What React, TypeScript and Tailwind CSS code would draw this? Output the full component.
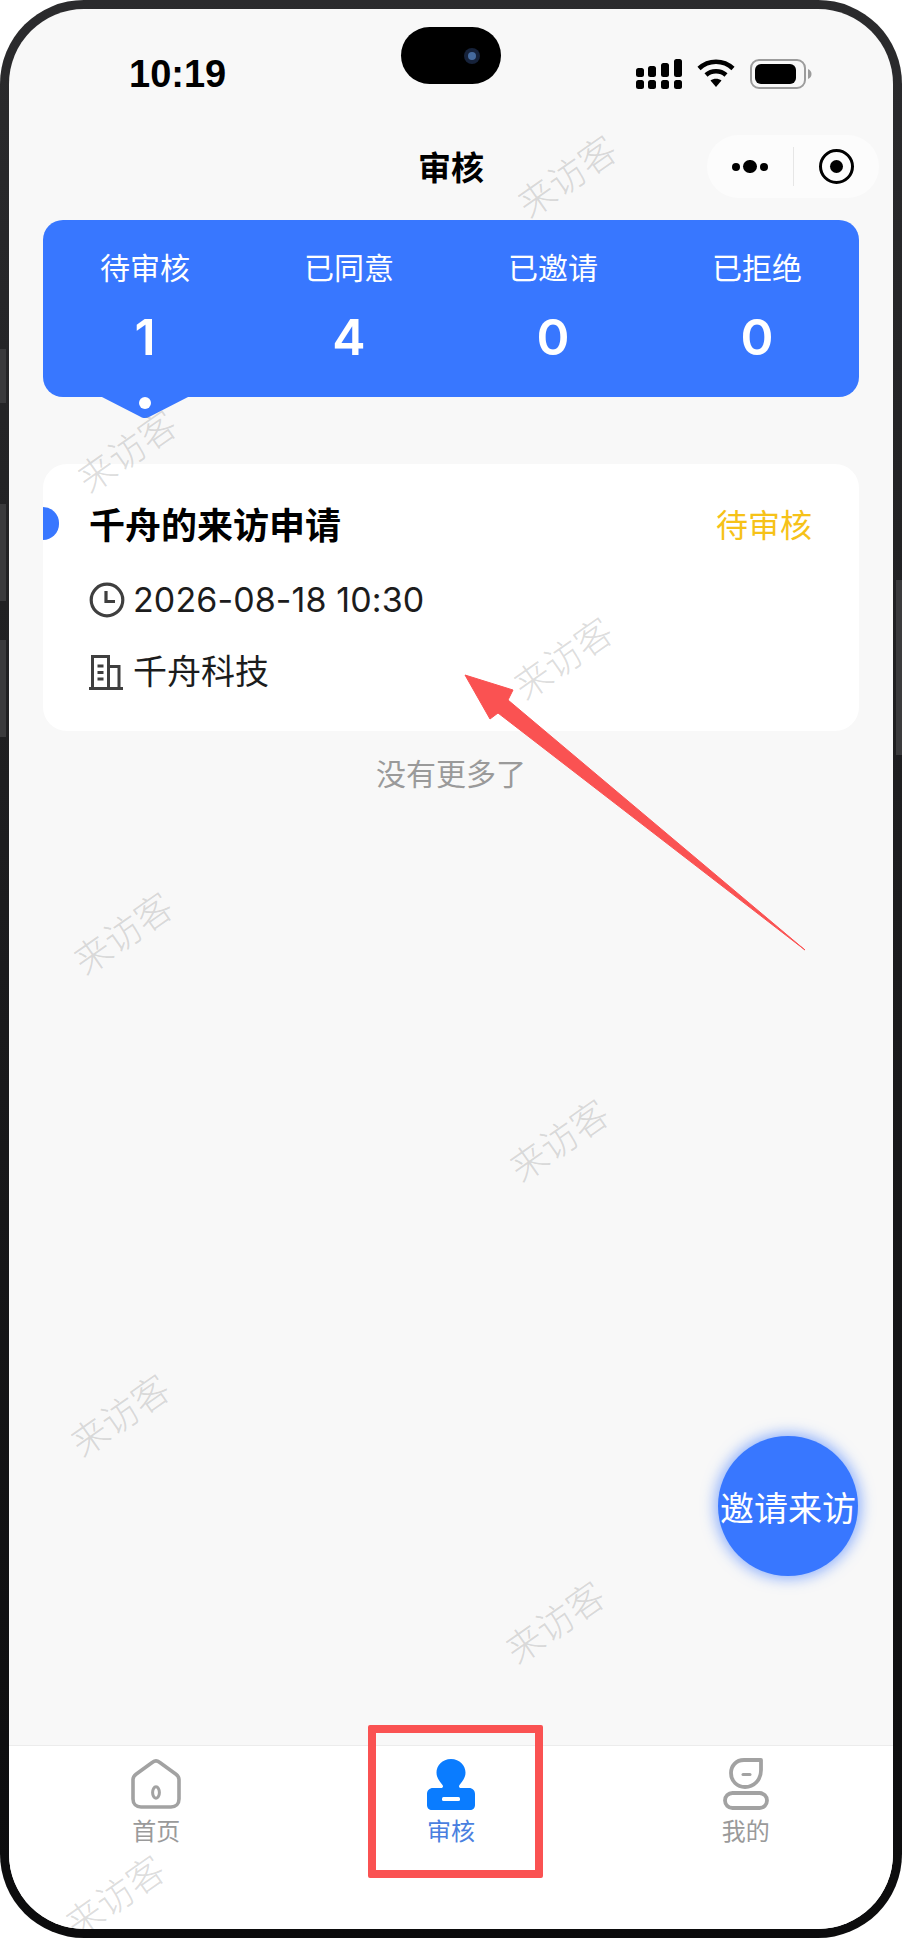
const stats = [
  { label: "待审核", value: 1 },
  { label: "已同意", value: 4 },
  { label: "已邀请", value: 0 },
  { label: "已拒绝", value: 0 },
];

// watermark centres, relative to the screen
const watermarks = [
  "left-[557px] top-[166px]",
  "left-[117px] top-[441px]",
  "left-[553px] top-[648px]",
  "left-[113px] top-[923px]",
  "left-[549px] top-[1130px]",
  "left-[110px] top-[1405px]",
  "left-[545px] top-[1612px]",
  "left-[105px] top-[1886px]",
];

const sideButtons = [
  "left-0 top-[349px] h-[54px]",
  "left-0 top-[504px] h-[97px]",
  "left-0 top-[640px] h-[97px]",
  "right-0 top-[580px] h-[175px]",
];

function SignalIcon() {
  return (
    <svg width="46" height="30" viewBox="0 0 46 30" fill="#000">
      <rect x="0" y="21" width="8" height="9" rx="2.5" />
      <rect x="12" y="21" width="8" height="9" rx="2.5" />
      <rect x="25" y="21" width="8" height="9" rx="2.5" />
      <rect x="38" y="21" width="8" height="9" rx="2.5" />
      <rect x="0" y="9" width="8" height="9" rx="2.5" />
      <rect x="12" y="7" width="8" height="11" rx="2.5" />
      <rect x="25" y="4" width="8" height="14" rx="2.5" />
      <rect x="38" y="0" width="8" height="18" rx="2.5" />
    </svg>
  );
}

function WifiIcon() {
  return (
    <svg width="38" height="28" viewBox="0 0 38 28" fill="none" stroke="#000" strokeWidth="4.5">
      <path d="M2 9.5C11.5 0.5 26.5 0.5 36 9.5" />
      <path d="M9 16C14.5 11 23.5 11 29 16" />
      <path d="M19 28L13.5 21.5C16.5 19 21.5 19 24.5 21.5Z" fill="#000" stroke="none" />
    </svg>
  );
}

function BatteryIcon() {
  return (
    <svg width="62" height="30" viewBox="0 0 62 30" fill="none">
      <rect x="1" y="1" width="54" height="28" rx="8" stroke="#9c9c9c" strokeWidth="2" />
      <rect x="5" y="5" width="41" height="20" rx="6" fill="#000" />
      <path d="M58 10C60.5 11 61.5 13 61.5 15C61.5 17 60.5 19 58 20Z" fill="#9c9c9c" />
    </svg>
  );
}

function ClockIcon() {
  return (
    <svg width="36" height="36" viewBox="0 0 36 36" fill="none" stroke="#3f3f3f" strokeWidth="3.2">
      <circle cx="18" cy="18" r="15.8" />
      <path d="M17 9V19.5H26" />
    </svg>
  );
}

function BuildingIcon() {
  return (
    <svg width="34" height="35" viewBox="0 0 34 35" fill="none" stroke="#3f3f3f" strokeWidth="3">
      <path d="M0 33.5H34" />
      <path d="M3.5 33V1.5H19.5V33" />
      <path d="M19.5 11.5H30V33" />
      <path d="M8.5 11H14.5M8.5 17.5H14.5M8.5 24H14.5" />
    </svg>
  );
}

function HomeIcon() {
  return (
    <svg width="50" height="50" viewBox="0 0 50 50" fill="none" stroke="#a2a2a2" strokeWidth="3.6">
      <path
        d="M21.5 3.2C23.6 1.6 26.4 1.6 28.5 3.2L45 15.2C46.9 16.6 48 18.6 48 20.8V40C48 44.8 44.8 48 40 48H10C5.2 48 2 44.8 2 40V20.8C2 18.6 3.1 16.6 5 15.2Z"
        strokeLinejoin="round"
      />
      <ellipse cx="25" cy="33.5" rx="3.4" ry="5.8" strokeWidth="3" />
    </svg>
  );
}

function StampIcon() {
  return (
    <svg width="50" height="51" viewBox="0 0 48 51" fill="none">
      <path
        d="M24 0C32.8 0 38.5 6.5 38.5 13.5C38.5 19 35.5 22 32.5 26C31.5 27.5 32 29 34 29H42C45.5 29 48 31.5 48 35V46C48 49 46 51 43 51H5C2 51 0 49 0 46V35C0 31.5 2.5 29 6 29H14C16 29 16.5 27.5 15.5 26C12.5 22 9.5 19 9.5 13.5C9.5 6.5 15.2 0 24 0Z"
        fill="#0a7cff"
      />
      <rect x="15" y="38" width="18" height="4" rx="1.5" fill="#fff" />
    </svg>
  );
}

function MeIcon() {
  return (
    <svg width="46" height="52" viewBox="0 0 46 52" fill="none" stroke="#a2a2a2" strokeWidth="3.8">
      <path d="M38 2H21C13 2 8 8 8 15C8 23 14 29 22 29C31 29 38 22 38 12Z" strokeLinejoin="round" />
      <path d="M20 16.5H27" strokeWidth="3" strokeLinecap="round" />
      <rect x="2" y="35" width="42" height="15" rx="7.5" />
    </svg>
  );
}

export default function App() {
  return (
    <div className="relative h-[1938px] w-[902px] overflow-hidden bg-white font-['Noto_Sans_CJK_SC',sans-serif]">
      {/* phone frame */}
      <div className="h-full w-full rounded-[84px] bg-gradient-to-b from-[#2b2b2d] via-[#1b1b1d] to-[#0c0c0d] p-[9px]">
        <div className="relative flex h-full flex-col overflow-hidden rounded-[75px] bg-[#f8f8f8]">
          {/* status bar */}
          <div className="flex h-[126px] shrink-0 items-start justify-between pl-[120px] pr-[81px] pt-[50px]">
            <span className="font-['Liberation_Sans',sans-serif] text-[38px] leading-[30px] font-bold text-black">
              10:19
            </span>
            <div className="flex items-start gap-[15px]">
              <SignalIcon />
              <WifiIcon />
              <BatteryIcon />
            </div>
          </div>

          {/* nav bar */}
          <div className="grid h-[63px] shrink-0 grid-cols-[1fr_auto_1fr] items-center">
            <div />
            <h1 className="text-[33px] leading-none font-bold text-black">审核</h1>
            <div className="mr-[14px] flex h-[63px] w-[172px] items-center justify-self-end rounded-[32px] bg-[#fcfcfc]">
              <div className="flex w-[86px] items-center justify-center gap-[3px]">
                <span className="h-[8px] w-[8px] rounded-full bg-black" />
                <span className="h-[13px] w-[14px] rounded-full bg-black" />
                <span className="h-[8px] w-[8px] rounded-full bg-black" />
              </div>
              <div className="h-[39px] w-px bg-[#e6e6e6]" />
              <div className="flex flex-1 items-center justify-center">
                <div className="flex h-[35px] w-[35px] items-center justify-center rounded-full border-[3.5px] border-black">
                  <span className="h-[13px] w-[13px] rounded-full bg-black" />
                </div>
              </div>
            </div>
          </div>

          {/* stats */}
          <div className="relative mx-[34px] mt-[22px] grid h-[177px] shrink-0 grid-cols-4 rounded-[20px] bg-[#3877ff] pt-[26px] text-center text-white">
            {stats.map((s) => (
              <div key={s.label}>
                <div className="text-[30px] leading-[40px]">{s.label}</div>
                <div className="mt-[26px] font-['Inter',sans-serif] text-[50px] leading-[50px] font-semibold">{s.value}</div>
              </div>
            ))}
            <svg className="absolute left-[57px] top-[176px]" width="90" height="23" viewBox="0 0 90 23">
              <path d="M0 0H90L50 20.5C46.5 22.5 43.5 22.5 40 20.5Z" fill="#3877ff" />
              <circle cx="45" cy="7" r="6" fill="#fff" />
            </svg>
          </div>

          {/* request card */}
          <div className="relative mx-[34px] mt-[67px] shrink-0 rounded-[24px] bg-white pb-[39px] pl-[46px] pr-[47px] pt-[37px]">
            <span className="absolute left-0 top-[43px] h-[33px] w-[16px] rounded-r-full bg-[#3877ff]" />
            <div className="flex items-center justify-between">
              <h2 className="text-[36px] leading-[44px] font-semibold text-black">千舟的来访申请</h2>
              <span className="text-[32px] leading-[40px] text-[#f6c218]">待审核</span>
            </div>
            <div className="mt-[35px] flex h-[40px] items-center gap-[8px]">
              <ClockIcon />
              <span className="font-['Inter',sans-serif] text-[34px] leading-[40px] tracking-[0.1px] text-[#1c1c1c]">2026-08-18 10:30</span>
            </div>
            <div className="mt-[32px] flex h-[40px] items-center gap-[10px]">
              <BuildingIcon />
              <span className="-translate-y-[2px] text-[34px] leading-[40px] text-[#1c1c1c]">千舟科技</span>
            </div>
          </div>

          <p className="mt-[21px] shrink-0 text-center text-[30px] leading-[40px] text-[#9a9a9a]">没有更多了</p>

          <div className="flex-1" />

          {/* tab bar */}
          <div className="grid h-[184px] shrink-0 grid-cols-3 border-t border-[#ececec] bg-white pt-[12px] text-center text-[24px] leading-[30px]">
            <div className="flex flex-col items-center text-[#9a9a9a]">
              <div className="flex h-[52px] items-center"><HomeIcon /></div>
              <span className="mt-[5px]">首页</span>
            </div>
            <div className="flex flex-col items-center text-[#4a7fe0]">
              <div className="flex h-[52px] items-center"><StampIcon /></div>
              <span className="mt-[5px]">审核</span>
            </div>
            <div className="flex flex-col items-center text-[#9a9a9a]">
              <div className="flex h-[52px] items-center"><MeIcon /></div>
              <span className="mt-[5px]">我的</span>
            </div>
          </div>

          {/* watermarks */}
          {watermarks.map((c) => (
            <span
              key={c}
              className={`pointer-events-none absolute -translate-x-1/2 -translate-y-1/2 -rotate-[35deg] text-[37px] leading-none font-light whitespace-nowrap text-[#8a8a8a]/30 ${c}`}
            >
              来访客
            </span>
          ))}
        </div>
      </div>

      {/* camera pill */}
      <div className="absolute left-[401px] top-[27px] flex h-[57px] w-[100px] items-center justify-end rounded-full bg-black pr-[21px]">
        <span className="flex h-[16px] w-[16px] items-center justify-center rounded-full bg-[#16223a]">
          <span className="h-[8px] w-[8px] rounded-full bg-[#456a9e]" />
        </span>
      </div>

      {/* side buttons */}
      {sideButtons.map((c) => (
        <span key={c} className={`absolute w-[6px] bg-[#3a3a3c] ${c}`} />
      ))}

      {/* floating action */}
      <button className="absolute left-[718px] top-[1436px] flex h-[140px] w-[140px] items-center justify-center whitespace-nowrap rounded-full bg-[#3877ff] text-[34px] text-white shadow-[0_0_14px_3px_rgba(56,119,255,0.55)]">
        邀请来访
      </button>

      {/* annotation arrow */}
      <svg className="pointer-events-none absolute left-[460px] top-[670px]" width="350" height="285" viewBox="460 670 350 285">
        <path d="M465 675L513 690L508 700L805 950L498 713L490 719Z" fill="#fa5252" stroke="#fa5252" strokeWidth="1" strokeLinejoin="round" />
      </svg>

      {/* annotation box */}
      <div className="pointer-events-none absolute left-[368px] top-[1725px] h-[153px] w-[175px] rounded-[2px] border-[8px] border-[#fa5252]" />
    </div>
  );
}
